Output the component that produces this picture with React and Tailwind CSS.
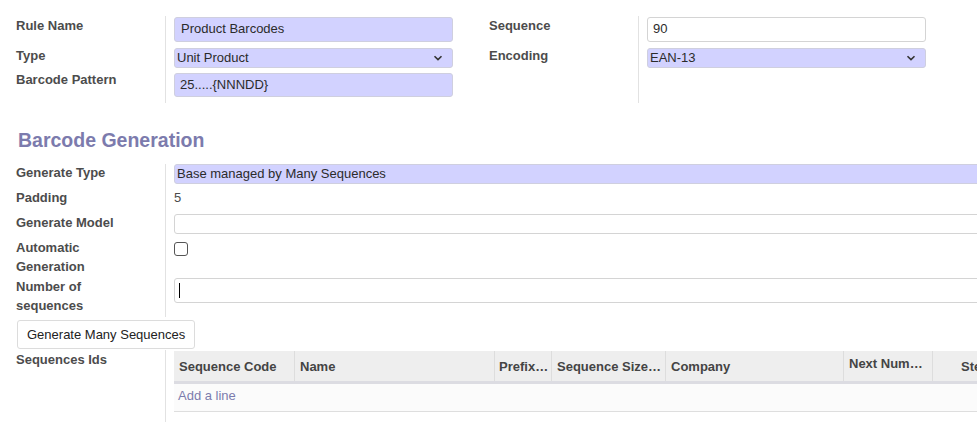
import React from "react";

const ChevronDown = () => (
    <svg width="10" height="6" viewBox="0 0 10 6" className="shrink-0">
        <path d="M1.5 1.2 L5 4.6 L8.5 1.2" fill="none" stroke="#333" strokeWidth="1.6" />
    </svg>
);

function Row({ label, labelClass = "", fieldClass = "", children }) {
    return (
        <div className="flex">
            <div className={`w-[149px] shrink-0 font-bold leading-[20px] ${labelClass}`}>{label}</div>
            <div className={`flex-1 border-l border-[#e2e2e2] pl-[8px] ${fieldClass}`}>{children}</div>
        </div>
    );
}

function TopGroup({ rows }) {
    return (
        <div className="w-[437px] pt-[16px]">
            {rows}
        </div>
    );
}

const inputBase = "rounded-[3px] border border-[#cfcfdf] text-[#2b2b2b] flex items-center";

export default function App() {
    const columns = [
        { name: "Sequence Code", w: "w-[120px]", cls: "pl-[5px]" },
        { name: "Name", w: "w-[200px]", cls: "pl-[5px]" },
        { name: "Prefix…", w: "w-[57px]", cls: "pl-[4px]" },
        { name: "Sequence Size…", w: "w-[114px]", cls: "pl-[5px]" },
        { name: "Company", w: "w-[178px]", cls: "pl-[5px]" },
        { name: "Next Num…", w: "w-[89px]", cls: "pl-[5px] pb-[5px]" },
        { name: "Step", w: "w-[80px]", cls: "pl-[28px]" },
        { name: "", w: "w-[200px]", cls: "" },
    ];

    return (
        <div className="w-[977px] h-[422px] overflow-hidden bg-white text-[13px] text-[#4c4c4c] font-['Liberation_Sans',Arial,sans-serif]">
            <div className="flex gap-[36px] px-[16px]">
                <TopGroup
                    rows={[
                        <Row key="a" label="Rule Name" fieldClass="pt-[1px] pb-[3px]">
                            <div className={`${inputBase} w-[279px] h-[25px] bg-[#d2d2ff] pl-[6px] pb-[1px]`}>Product Barcodes</div>
                        </Row>,
                        <Row key="b" label="Type" labelClass="pt-[1px]" fieldClass="pt-[3px] pb-[3px]">
                            <div className={`${inputBase} w-[279px] h-[20px] bg-[#d2d2ff] pl-[2px] pr-[9px] pb-[1px] justify-between`}>
                                <span>Unit Product</span>
                                <ChevronDown />
                            </div>
                        </Row>,
                        <Row key="c" label="Barcode Pattern" labelClass="-mt-[1px]" fieldClass="pt-[2px] pb-[6px]">
                            <div className={`${inputBase} w-[279px] h-[24px] bg-[#d2d2ff] pl-[5px]`}>25.....{"{NNNDD}"}</div>
                        </Row>,
                    ]}
                />
                <TopGroup
                    rows={[
                        <Row key="a" label="Sequence" fieldClass="pt-[1px] pb-[3px]">
                            <div className={`${inputBase} w-[279px] h-[25px] bg-white border-[#d4d4d4] pl-[5px] pb-[1px]`}>90</div>
                        </Row>,
                        <Row key="b" label="Encoding" labelClass="pt-[1px]" fieldClass="pt-[3px] pb-[3px]">
                            <div className={`${inputBase} w-[279px] h-[20px] bg-[#d2d2ff] pl-[2px] pr-[9px] pb-[1px] justify-between`}>
                                <span>EAN-13</span>
                                <ChevronDown />
                            </div>
                        </Row>,
                        <Row key="c" label="" fieldClass="h-[32px]" />,
                    ]}
                />
            </div>

            <h2 className="mt-[26px] ml-[18px] text-[19.5px] leading-[23px] font-bold text-[#7c7bad]">Barcode Generation</h2>

            <div className="w-[1400px] mt-[12px] pl-[16px]">
                <Row label="Generate Type" labelClass="-mt-[1px]" fieldClass="pb-[3px]">
                    <div className={`${inputBase} h-[20px] bg-[#d2d2ff] pl-[2px] pb-[1px]`}>Base managed by Many Sequences</div>
                </Row>
                <Row label="Padding" labelClass="pt-[1px]" fieldClass="pt-[1px] pb-[3px]">
                    <div className="leading-[20px]">5</div>
                </Row>
                <Row label="Generate Model" labelClass="pt-[2px]" fieldClass="pt-[3px] pb-[3px]">
                    <div className={`${inputBase} h-[20px] bg-white border-[#d4d4d4]`}></div>
                </Row>
                <Row label={<>Automatic<br />Generation</>} labelClass="pt-[1px] !leading-[19px]" fieldClass="pt-[5px] h-[40px]">
                    <div className="w-[14px] h-[14px] rounded-[3px] border-[1.5px] border-[#555]"></div>
                </Row>
                <Row label={<>Number of<br />sequences</>} labelClass="!leading-[19px]" fieldClass="pt-[1px] h-[40px]">
                    <div className={`${inputBase} h-[25px] bg-white border-[#d4d4d4] pl-[4px]`}>
                        <span className="w-px h-[15px] bg-black"></span>
                    </div>
                </Row>

                <div className="pt-[3px] pb-[1px]">
                    <button className="ml-[1px] h-[29px] px-[9px] rounded-[3px] border border-[#dcdcdc] bg-white text-[#222] text-[13px]">
                        Generate Many Sequences
                    </button>
                </div>

                <Row label="Sequences Ids" fieldClass="pt-[1px] h-[72px]">
                    <div className="flex h-[30px] bg-[#eeeeee] border-b-[3px] border-[#dcdce2] box-content">
                        {columns.map((c, i) => (
                            <div
                                key={i}
                                className={`${c.w} shrink-0 flex items-center pt-[1px] font-bold text-[#444] ${c.cls} ${i > 0 ? "border-l border-[#dddddd]" : ""}`}
                            >
                                {c.name}
                            </div>
                        ))}
                    </div>
                    <div className="h-[28px] bg-[#fbfbfb] border-b border-[#dedede] pl-[4px] pt-[2px] leading-[20px] text-[#7c7bad]">
                        Add a line
                    </div>
                </Row>
            </div>
        </div>
    );
}
